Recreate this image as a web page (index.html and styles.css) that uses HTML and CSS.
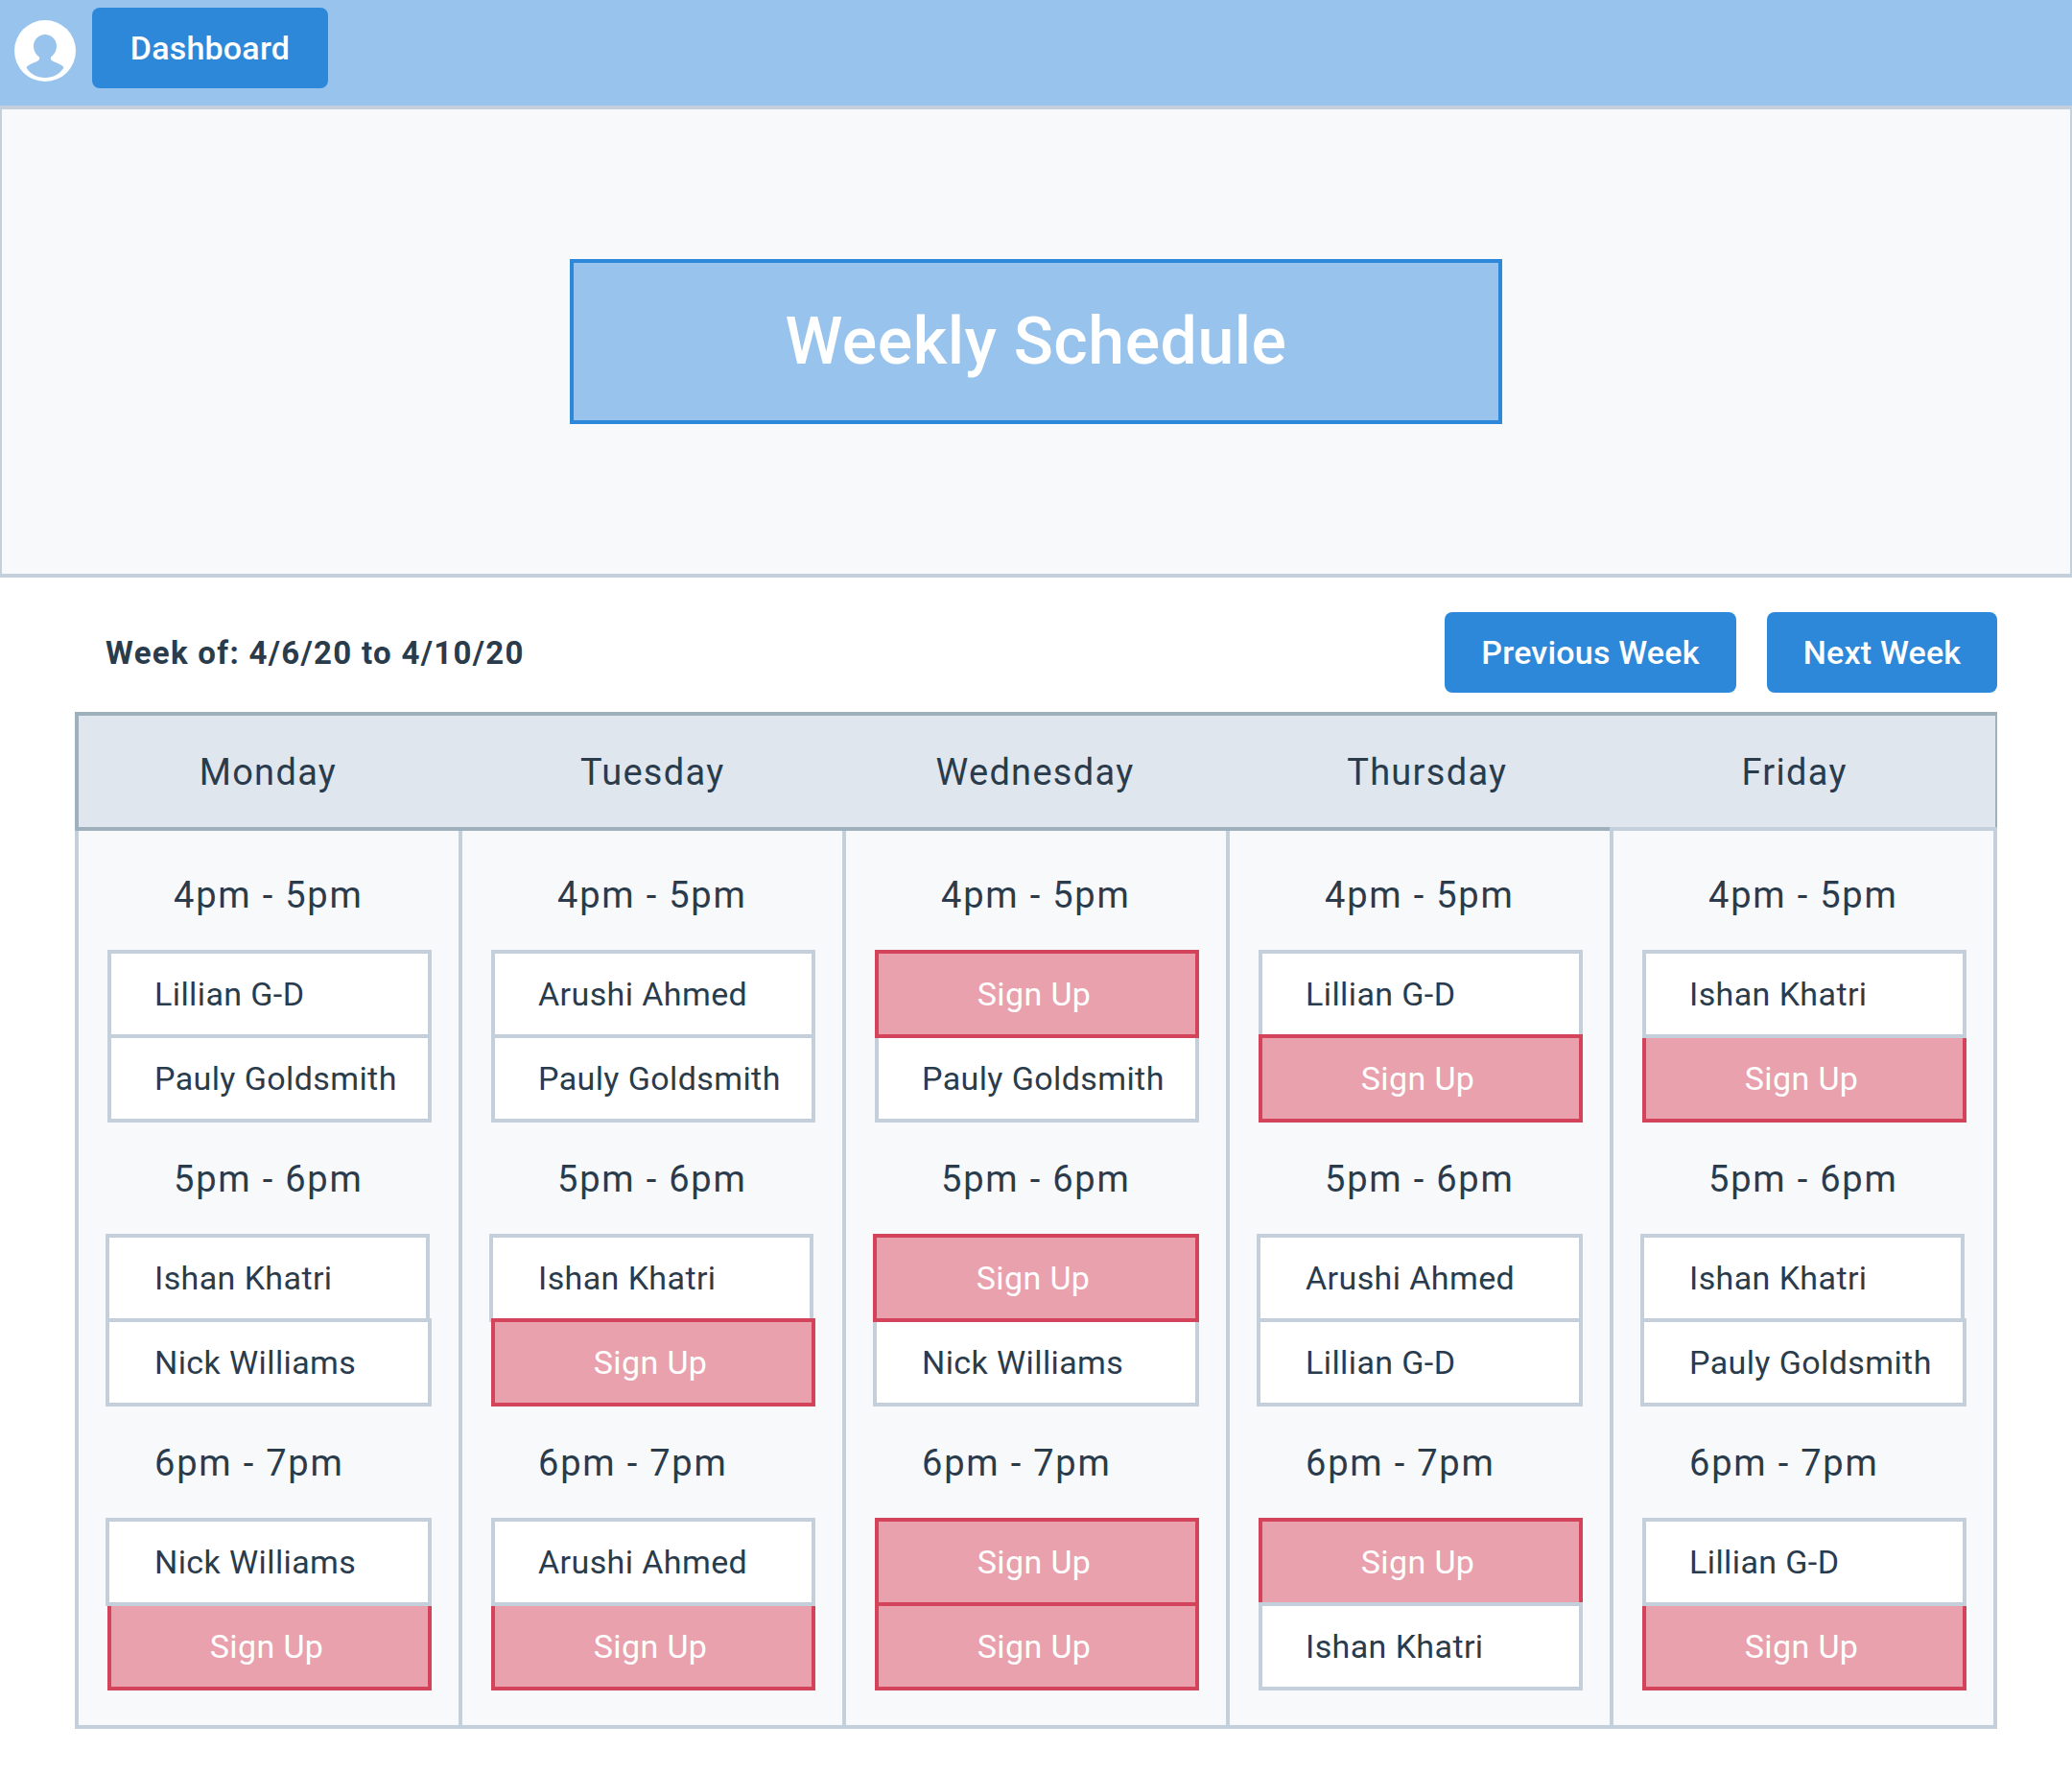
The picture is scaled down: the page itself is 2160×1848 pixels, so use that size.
FILE: index.html
```html
<!DOCTYPE html>
<html lang="en">
<head>
    <meta charset="UTF-8">
    <title>Weekly Schedule</title>
    <link rel="stylesheet" href="styles.css">
</head>
<body>
<div class="nav">
    <svg class="avatar" viewBox="0 0 64 64">
        <circle cx="32" cy="32" r="32" fill="#fff"/>
        <path fill="#97c3ed" d="M32 15c-6.500 0-12 5-12 12 0 5 2.500 9 6 11.500 .8 2-.5 3.500-2.500 4.500-4 2-9 3-11 6.500 4 6.500 11 10.500 19.500 10.500s15.500-4 19.500-10.500c-2-3.500-7-4.500-11-6.500-2-1-3.300-2.500-2.500-4.500 3.500-2.500 6-6.500 6-11.500 0-7-5.500-12-12-12z"/>
    </svg>
    <a class="btn nav-btn">Dashboard</a>
</div>

<div class="hero">
    <h1 class="hero-title">Weekly Schedule</h1>
</div>

<div class="week-bar">
    <span class="week-label">Week of: 4/6/20 to 4/10/20</span>
    <div class="week-btns">
        <a class="btn prev-btn">Previous Week</a>
        <a class="btn next-btn">Next Week</a>
    </div>
</div>

<div class="schedule">
    <div class="days-head">
        <span class="head-mon">Monday</span>
        <span>Tuesday</span>
        <span>Wednesday</span>
        <span class="head-thu">Thursday</span>
        <span class="head-fri">Friday</span>
    </div>
    <div class="days">
        <!-- monday -->
        <div class="day">
            <div class="time">4pm - 5pm</div>
            <div class="slot">Lillian G-D</div>
            <div class="slot">Pauly Goldsmith</div>
            <div class="time">5pm - 6pm</div>
            <div class="slot slot-left">Ishan Khatri</div>
            <div class="slot slot-wide">Nick Williams</div>
            <div class="time time-late">6pm - 7pm</div>
            <div class="slot slot-wide">Nick Williams</div>
            <div class="slot signup no-top">Sign Up</div>
        </div>
        <!-- tuesday -->
        <div class="day">
            <div class="time">4pm - 5pm</div>
            <div class="slot">Arushi Ahmed</div>
            <div class="slot">Pauly Goldsmith</div>
            <div class="time">5pm - 6pm</div>
            <div class="slot slot-left">Ishan Khatri</div>
            <div class="slot signup">Sign Up</div>
            <div class="time time-late">6pm - 7pm</div>
            <div class="slot">Arushi Ahmed</div>
            <div class="slot signup no-top">Sign Up</div>
        </div>
        <!-- wednesday -->
        <div class="day">
            <div class="time">4pm - 5pm</div>
            <div class="slot signup">Sign Up</div>
            <div class="slot no-top">Pauly Goldsmith</div>
            <div class="time">5pm - 6pm</div>
            <div class="slot signup slot-wide">Sign Up</div>
            <div class="slot slot-wide no-top">Nick Williams</div>
            <div class="time time-late">6pm - 7pm</div>
            <div class="slot signup">Sign Up</div>
            <div class="slot signup">Sign Up</div>
        </div>
        <!-- thursday -->
        <div class="day">
            <div class="time">4pm - 5pm</div>
            <div class="slot">Lillian G-D</div>
            <div class="slot signup">Sign Up</div>
            <div class="time">5pm - 6pm</div>
            <div class="slot slot-wide">Arushi Ahmed</div>
            <div class="slot slot-wide">Lillian G-D</div>
            <div class="time time-late">6pm - 7pm</div>
            <div class="slot signup">Sign Up</div>
            <div class="slot">Ishan Khatri</div>
        </div>
        <!-- friday -->
        <div class="day day-last">
            <div class="time">4pm - 5pm</div>
            <div class="slot">Ishan Khatri</div>
            <div class="slot signup no-top">Sign Up</div>
            <div class="time">5pm - 6pm</div>
            <div class="slot slot-left">Ishan Khatri</div>
            <div class="slot slot-wide">Pauly Goldsmith</div>
            <div class="time time-late">6pm - 7pm</div>
            <div class="slot">Lillian G-D</div>
            <div class="slot signup no-top">Sign Up</div>
        </div>
    </div>
</div>
</body>
</html>
```

FILE: styles.css
```css
* {
    box-sizing: border-box;
    padding: 0;
    margin: 0;
}

body {
    font-family: Roboto, "Liberation Sans", sans-serif;
    color: #2a3b4c;
    background-color: #fff;
    height: 1848px;
    overflow: hidden;
}

.nav {
    height: 110px;
    background-color: #97c3ed;
    display: flex;
    align-items: flex-start;
    padding: 8px 0 0 15px;
}

.avatar {
    width: 64px;
    height: 64px;
    margin: 13px 17px 0 0;
}

.btn {
    display: flex;
    align-items: center;
    justify-content: center;
    height: 84px;
    background-color: #2d88da;
    color: #fff;
    border-radius: 8px;
    font-size: 34px;
    font-weight: 500;
    letter-spacing: 0.2px;
}

.nav-btn {
    width: 246px;
}

.hero {
    height: 492px;
    background-color: #f7f9fb;
    border: solid #c3d0dc;
    border-width: 4px 2px;
    display: flex;
    justify-content: center;
    padding-top: 156px;
}

.hero-title {
    width: 972px;
    height: 172px;
    background-color: #97c3ed;
    border: 4px solid #2d88da;
    color: #fff;
    font-size: 68px;
    font-weight: 500;
    letter-spacing: 0.5px;
    display: flex;
    align-items: center;
    justify-content: center;
}

.week-bar {
    display: flex;
    align-items: center;
    justify-content: space-between;
    padding: 36px 78px 20px 110px;
}

.week-label {
    font-size: 33px;
    font-weight: 700;
    letter-spacing: 1.3px;
}

.week-btns {
    display: flex;
    gap: 32px;
}

.prev-btn {
    width: 304px;
}

.next-btn {
    width: 240px;
}

.schedule {
    margin: 0 78px;
}

.days-head {
    height: 124px;
    background-color: #dfe6ee;
    border: 4px solid #9fb0bd;
    border-right-width: 2px;
    padding: 2px 4px 0 0;
    display: grid;
    grid-template-columns: repeat(5, 1fr);
    align-items: center;
    justify-items: center;
    font-size: 38px;
    letter-spacing: 1.3px;
}

.head-mon {
    margin-right: 4px;
}

.head-thu {
    margin-left: 20px;
}

.head-fri {
    margin-right: 12px;
}

.days {
    display: flex;
}

.day {
    width: 404px;
    height: 936px;
    background-color: #f7f9fb;
    border: solid #c3d0dc;
    border-width: 0 4px 4px;
    padding-left: 30px;
}

.day + .day {
    margin-left: -4px;
}

/* friday's light top line sits over the header's dark one */
.day-last {
    height: 940px;
    margin-top: -4px;
    border-top-width: 4px;
}

.time {
    height: 116px;
    padding: 35px 0 0 69px;
    font-size: 38px;
    letter-spacing: 1.8px;
    line-height: 48px;
}

.day > .time:first-child {
    height: 124px;
    padding-top: 43px;
}

.time-late {
    padding-left: 49px;
}

.slot {
    width: 338px;
    height: 92px;
    background-color: #fff;
    border: 4px solid #c3d0dc;
    display: flex;
    align-items: center;
    padding-left: 45px;
    font-size: 34px;
    letter-spacing: 0.4px;
}

.slot + .slot {
    margin-top: -4px;
}

.slot-left {
    margin-left: -2px;
    padding-left: 47px;
}

.slot-wide {
    width: 340px;
    margin-left: -2px;
    padding-left: 47px;
}

.signup {
    background-color: #e9a1ad;
    border-color: #d3435b;
    color: #fff;
    padding: 0 6px 0 0;
    justify-content: center;
}

/* the slot above keeps its own bottom line */
.slot + .no-top {
    height: 88px;
    margin-top: 0;
    border-top: none;
}
```
